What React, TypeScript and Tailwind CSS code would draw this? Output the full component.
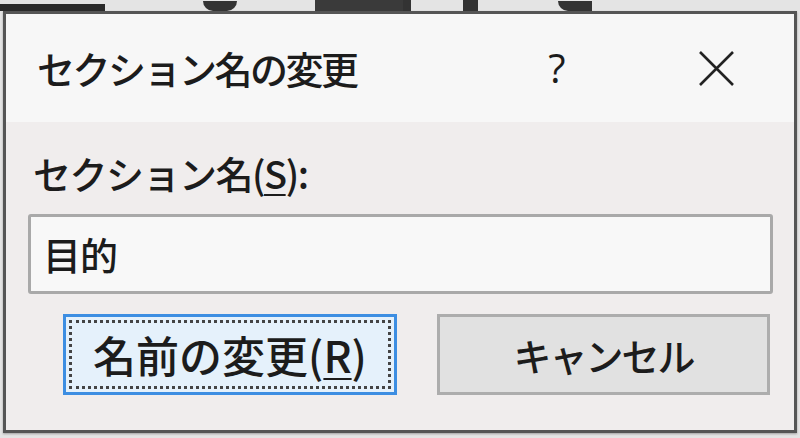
import React from 'react';

const jp = { fontFamily: '"Noto Sans CJK JP", "Noto Sans", sans-serif' };

export default function App() {
  return (
    <div className="w-[800px] h-[438px] bg-[#e4e4e4] overflow-hidden text-[#1c1c1c] font-medium" style={jp}>
      {/* slide content peeking out above the dialog */}
      <div className="h-[11px] flex items-end">
        <div className="w-[105px] h-[7px] bg-[#2a2a2a]" />
        <div className="w-[98px]" />
        <div className="w-[34px] h-[10px] bg-[#333] rounded-b-[10px]" />
        <div className="w-[78px]" />
        <div className="w-[88px] h-[11px] bg-[#3a3a3a]" />
        <div className="w-[8px] h-[11px] bg-[#333]" />
        <div className="w-[52px]" />
        <div className="w-[15px] h-[11px] bg-[#333]" />
        <div className="w-[80px]" />
        <div className="w-[34px] h-[10px] bg-[#333] rounded-bl-[12px]" />
      </div>

      {/* dialog */}
      <div className="ml-[3px] w-[794px] h-[422px] border-[3px] border-[#555] flex flex-col shadow-[0_1px_2px_rgba(0,0,0,0.3)]">
        {/* title bar */}
        <div className="h-[108px] bg-[#f7f7f7] flex items-center">
          <div className="pl-[31px] text-[38px] tracking-[-2.5px] leading-none">セクション名の変更</div>
          <div className="flex-1" />
          <div className="w-[24px] text-[40px] leading-none text-center" style={{ fontFamily: '"Open Sans", sans-serif' }}>?</div>
          <div className="w-[129px]" />
          <svg width="37" height="37" viewBox="0 0 37 37">
            <path d="M2 2 L35 35 M35 2 L2 35" stroke="#222" strokeWidth="2.6" />
          </svg>
          <div className="w-[59px]" />
        </div>

        {/* body */}
        <div className="flex-1 bg-[#f0eded] flex flex-col px-[22px] pt-[26px]">
          <div className="pl-[5px] text-[38px] tracking-[-1.5px] leading-[50px]">
            セクション名(<span className="underline underline-offset-[5px] decoration-2">S</span>):
          </div>
          <div className="mt-[16px] h-[80px] w-[745px] border-[3px] border-[#a9a9a9] rounded-[3px] bg-[#f8f8f8] flex items-center pl-[12px] text-[38px] tracking-[-1px] leading-none">
            目的
          </div>
          <div className="mt-[20px] flex gap-[40px] pl-[35px]">
            <div className="w-[334px] h-[81px] border-[3px] border-[#3d8ee2] bg-[#e5f1fb] p-[3px]">
              <div className="h-full border-[3px] border-dotted border-[#444] flex items-center justify-center text-[43px] tracking-[0px] leading-none">
                名前の変更(<span className="underline underline-offset-[5px] decoration-2">R</span>)
              </div>
            </div>
            <div className="w-[333px] h-[81px] border-[3px] border-[#adadad] bg-[#e1e1e1] flex items-center justify-center text-[38px] tracking-[-2px] leading-none">
              キャンセル
            </div>
          </div>
        </div>
      </div>
    </div>
  );
}
